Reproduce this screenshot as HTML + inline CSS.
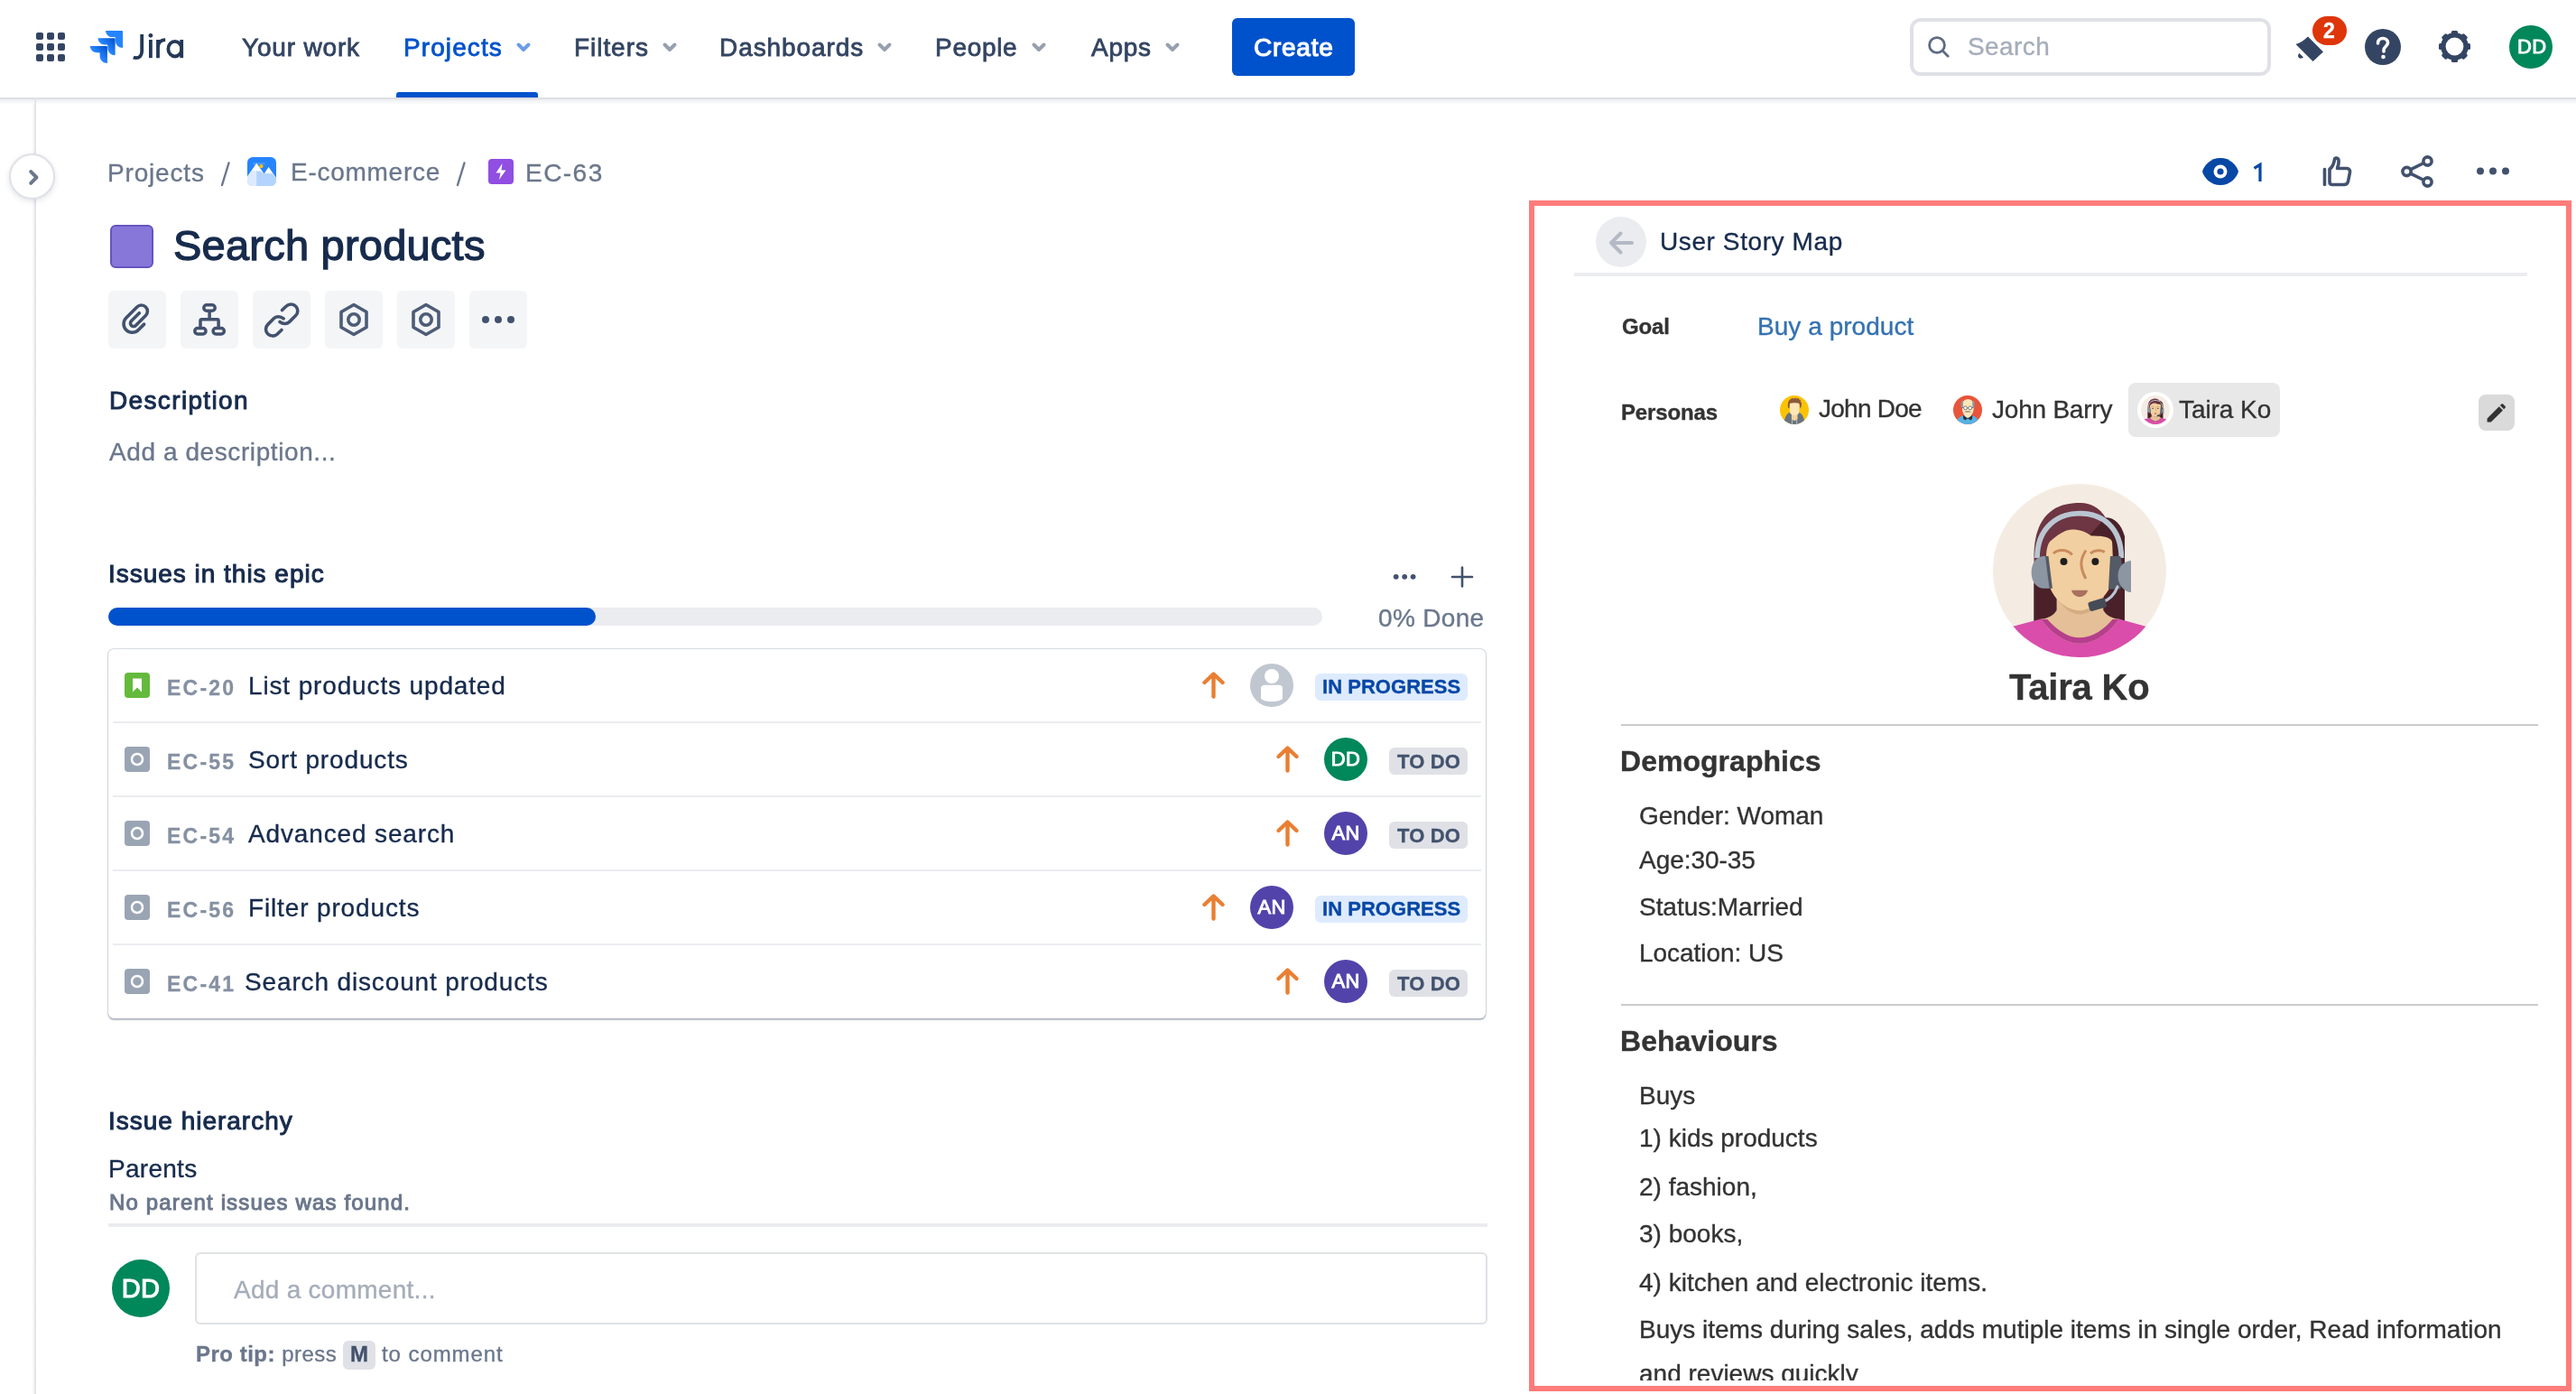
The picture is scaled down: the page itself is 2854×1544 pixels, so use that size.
<!DOCTYPE html>
<html><head><meta charset="utf-8">
<style>
*{box-sizing:border-box;margin:0;padding:0}
html,body{width:2854px;height:1544px;overflow:hidden;background:#fff;font-family:"Liberation Sans",sans-serif}
.a{position:absolute}
.t{position:absolute;white-space:nowrap;line-height:1;will-change:transform}
svg{position:absolute;overflow:visible}
</style></head><body>
<!-- HEADER -->
<div class="a" style="left:0;top:0;width:2854px;height:108px;background:#fff"></div>
<div class="a" style="left:0;top:108px;width:2854px;height:2px;background:#DCDFE4"></div>
<div class="a" style="left:0;top:110px;width:2854px;height:6px;background:linear-gradient(#EDEEF1,rgba(255,255,255,0))"></div>
<!-- app grid -->
<svg style="left:40px;top:36px" width="32" height="32" viewBox="0 0 32 32" fill="#344563">
<rect x="0" y="0" width="8" height="8" rx="2"/><rect x="12" y="0" width="8" height="8" rx="2"/><rect x="24" y="0" width="8" height="8" rx="2"/>
<rect x="0" y="12" width="8" height="8" rx="2"/><rect x="12" y="12" width="8" height="8" rx="2"/><rect x="24" y="12" width="8" height="8" rx="2"/>
<rect x="0" y="24" width="8" height="8" rx="2"/><rect x="12" y="24" width="8" height="8" rx="2"/><rect x="24" y="24" width="8" height="8" rx="2"/>
</svg>
<!-- jira logo -->
<svg style="left:99px;top:33px" width="38" height="38" viewBox="0 0 38 38">
<defs>
<linearGradient id="jg1" x1="0.95" y1="0.05" x2="0.45" y2="0.5"><stop offset="0" stop-color="#0052CC"/><stop offset="1" stop-color="#2684FF"/></linearGradient>
</defs>
<path transform="translate(18.1 0.9)" d="M0 0 H18 Q19 0 19 1 V19 C14.5 19 10.7 15.5 10.7 11 V8.2 C10.7 7.6 10.4 7.2 9.8 7.2 H7.2 C3.2 7.2 0 4 0 0 Z" fill="#2684FF"/>
<path transform="translate(9.6 9.3)" d="M0 0 H18 Q19 0 19 1 V19 C14.5 19 10.7 15.5 10.7 11 V8.2 C10.7 7.6 10.4 7.2 9.8 7.2 H7.2 C3.2 7.2 0 4 0 0 Z" fill="url(#jg1)"/>
<path transform="translate(0.9 18)" d="M0 0 H18 Q19 0 19 1 V19 C14.5 19 10.7 15.5 10.7 11 V8.2 C10.7 7.6 10.4 7.2 9.8 7.2 H7.2 C3.2 7.2 0 4 0 0 Z" fill="url(#jg1)"/>
</svg>
<svg style="left:140px;top:30px" width="70" height="40" viewBox="140 30 70 40" fill="none" stroke="#253858" stroke-width="3.8">
<path d="M157.2 38 V56.5 C157.2 61.5 154.5 64.2 150.8 64.2 C149.7 64.2 148.7 64 147.8 63.6"/>
<circle cx="166.9" cy="39.3" r="2.4" fill="#253858" stroke="none"/>
<path d="M166.9 44 V64.2"/>
<path d="M175 44 V64.2 M175 53 C175 47.5 178 44.2 183.2 44.2"/>
<ellipse cx="193.8" cy="54.2" rx="7.4" ry="8.3"/>
<path d="M201.2 44 V64.2"/>
</svg>
<!-- nav -->
<svg style="left:572px;top:47px" width="16" height="11" viewBox="0 0 16 11"><path d="M2.5 2.5 L8 8 L13.5 2.5" fill="none" stroke="#6C9DE6" stroke-width="4" stroke-linecap="round" stroke-linejoin="round"/></svg>
<div class="a" style="left:439px;top:102px;width:157px;height:6px;background:#0052CC;border-radius:3px 3px 0 0"></div>
<svg style="left:734px;top:47px" width="16" height="11" viewBox="0 0 16 11"><path d="M2.5 2.5 L8 8 L13.5 2.5" fill="none" stroke="#97A0AF" stroke-width="4" stroke-linecap="round" stroke-linejoin="round"/></svg>
<svg style="left:972px;top:47px" width="16" height="11" viewBox="0 0 16 11"><path d="M2.5 2.5 L8 8 L13.5 2.5" fill="none" stroke="#97A0AF" stroke-width="4" stroke-linecap="round" stroke-linejoin="round"/></svg>
<svg style="left:1143px;top:47px" width="16" height="11" viewBox="0 0 16 11"><path d="M2.5 2.5 L8 8 L13.5 2.5" fill="none" stroke="#97A0AF" stroke-width="4" stroke-linecap="round" stroke-linejoin="round"/></svg>
<svg style="left:1291px;top:47px" width="16" height="11" viewBox="0 0 16 11"><path d="M2.5 2.5 L8 8 L13.5 2.5" fill="none" stroke="#97A0AF" stroke-width="4" stroke-linecap="round" stroke-linejoin="round"/></svg>
<div class="a" style="left:1365px;top:20px;width:136px;height:64px;background:#0052CC;border-radius:6px"></div>
<!-- search -->
<div class="a" style="left:2116px;top:20px;width:400px;height:64px;border:4px solid #DFE1E6;border-radius:12px;background:#fff"></div>
<svg style="left:2136px;top:40px" width="24" height="24" viewBox="0 0 24 24"><circle cx="10" cy="10" r="8.4" fill="none" stroke="#5E6C84" stroke-width="2.8"/><path d="M16.3 16.3 L22.2 22.2" stroke="#5E6C84" stroke-width="2.8" stroke-linecap="round"/></svg>
<!-- bell -->
<svg style="left:2543px;top:36px" width="34" height="34" viewBox="0 0 34 34">
<path d="M0.5 13 C5 11.5 9.5 9 14 4.5 L31 21.5 C27 25 24 28 19.5 32 Z" fill="#344563"/>
<path d="M4.5 23 C2.5 24.5 2.5 27.5 5 28.5 C6.5 29 8 28.5 9 27.5 Z" fill="#344563"/>
</svg>
<div class="a" style="left:2562px;top:18px;width:38px;height:32px;background:#DE350B;border-radius:16px"></div>
<!-- help -->
<div class="a" style="left:2620px;top:32px;width:40px;height:40px;background:#344563;border-radius:50%"></div>
<svg style="left:2620px;top:32px" width="40" height="40" viewBox="0 0 40 40"><path d="M14.5 16 C14.5 12.5 17 10.5 20 10.5 C23 10.5 25.5 12.5 25.5 15.5 C25.5 19 21 19.5 21 23.5 L21 25" fill="none" stroke="#fff" stroke-width="3.6" stroke-linecap="round"/><circle cx="20.5" cy="31" r="2.3" fill="#fff"/></svg>
<!-- gear -->
<svg style="left:2702px;top:34px" width="35" height="35" viewBox="0 0 35 35">
<g fill="#344563" transform="translate(17.5 17.5)">
<rect x="-3.6" y="-17.5" width="7.2" height="7" rx="1.6"/><rect x="-3.6" y="-17.5" width="7.2" height="7" rx="1.6" transform="rotate(45)"/><rect x="-3.6" y="-17.5" width="7.2" height="7" rx="1.6" transform="rotate(90)"/><rect x="-3.6" y="-17.5" width="7.2" height="7" rx="1.6" transform="rotate(135)"/><rect x="-3.6" y="-17.5" width="7.2" height="7" rx="1.6" transform="rotate(180)"/><rect x="-3.6" y="-17.5" width="7.2" height="7" rx="1.6" transform="rotate(225)"/><rect x="-3.6" y="-17.5" width="7.2" height="7" rx="1.6" transform="rotate(270)"/><rect x="-3.6" y="-17.5" width="7.2" height="7" rx="1.6" transform="rotate(315)"/>
</g>
<circle cx="17.5" cy="17.5" r="12.6" fill="none" stroke="#344563" stroke-width="5.4"/>
</svg>
<!-- avatar -->
<div class="a" style="left:2780px;top:28px;width:48px;height:48px;background:#00875A;border-radius:50%"></div>

<!-- SIDEBAR -->
<div class="a" style="left:35px;top:116px;width:3px;height:1428px;background:linear-gradient(90deg,rgba(245,245,245,0),#F4F4F5)"></div>
<div class="a" style="left:38px;top:108px;width:2px;height:1436px;background:#E4E5E8"></div>
<div class="a" style="left:10px;top:170px;width:51px;height:51px;border-radius:50%;background:#fff;border:2px solid #DFE1E6;box-shadow:0 2px 6px rgba(9,30,66,0.12)"></div>
<svg style="left:32px;top:188px" width="11" height="17" viewBox="0 0 11 17"><path d="M2.2 2.2 L8.5 8.5 L2.2 14.8" fill="none" stroke="#6B778C" stroke-width="4" stroke-linecap="round" stroke-linejoin="round"/></svg>


<!-- BREADCRUMB -->
<svg style="left:274px;top:174px" width="32" height="32" viewBox="0 0 32 32">
<defs><clipPath id="ecc"><rect width="32" height="32" rx="6"/></clipPath></defs>
<g clip-path="url(#ecc)">
<rect width="32" height="32" fill="#2684FF"/>
<rect x="5.9" y="6.2" width="14" height="2.3" rx="1.15" fill="#4C9AFF"/>
<circle cx="15.4" cy="10.2" r="2.1" fill="#FFC400"/>
<path d="M-1 23 L10.2 6.8 L18.6 18.6 L23.6 10.9 L33 24.5 L33 33 L-1 33 Z" fill="#fff"/>
<path d="M-1 23 L4.7 15.2 L6 16 L7.5 15 L9 16.2 L10.5 15 L12 16 L13.5 15 L14.6 15.8 L18.6 18.6 L20.5 17.7 L22 18.4 L23.5 17.5 L25 18.5 L27.3 17.7 L33 24.5 L33 33 L-1 33 Z" fill="#B3D4FF"/>
<path d="M-1 23 L4.7 15.2 L6 16 L7.5 15 L9 16.2 L10.2 15.4 L10.2 33 L-1 33 Z" fill="#DEEBFF"/>
</g>
</svg>
<svg style="left:541px;top:176px" width="28" height="28" viewBox="0 0 28 28"><rect width="28" height="28" rx="4" fill="#904EE2"/><path d="M15.5 5 L8.5 15.5 H13.5 L12 23 L19.5 12.5 H14.5 Z" fill="#fff"/></svg>

<svg style="left:244px;top:178px" width="12" height="30" viewBox="0 0 12 30"><path d="M2 27 L9.5 2.5" stroke="#6B778C" stroke-width="2.4" stroke-linecap="round"/></svg>
<svg style="left:505px;top:178px" width="12" height="30" viewBox="0 0 12 30"><path d="M2 27 L9.5 2.5" stroke="#6B778C" stroke-width="2.4" stroke-linecap="round"/></svg>
<!-- TITLE -->
<div class="a" style="left:122px;top:249px;width:48px;height:48px;background:#8777D9;border:2px solid #6554C0;border-radius:6px"></div>

<!-- TOOLBAR -->
<div class="a" style="left:120px;top:322px;width:64px;height:64px;background:#F4F5F7;border-radius:6px"></div>
<div class="a" style="left:200px;top:322px;width:64px;height:64px;background:#F4F5F7;border-radius:6px"></div>
<div class="a" style="left:280px;top:322px;width:64px;height:64px;background:#F4F5F7;border-radius:6px"></div>
<div class="a" style="left:360px;top:322px;width:64px;height:64px;background:#F4F5F7;border-radius:6px"></div>
<div class="a" style="left:440px;top:322px;width:64px;height:64px;background:#F4F5F7;border-radius:6px"></div>
<div class="a" style="left:520px;top:322px;width:64px;height:64px;background:#F4F5F7;border-radius:6px"></div>
<!-- paperclip -->
<svg style="left:120px;top:322px" width="64" height="64" viewBox="0 0 64 64"><g transform="translate(31.5 31.8) rotate(45)"><path d="M9.5 -2 V7 A9.5 9.5 0 0 1 -9.5 7 V-10 A6.75 6.75 0 0 1 4 -10 V5.5 A3.5 3.5 0 0 1 -3 5.5 V-7" fill="none" stroke="#42526E" stroke-width="3.6" stroke-linecap="round"/></g></svg>
<!-- hierarchy -->
<svg style="left:200px;top:322px" width="64" height="64" viewBox="0 0 64 64" fill="none" stroke="#42526E" stroke-width="3.5"><rect x="25.8" y="15.8" width="12.4" height="6.4" rx="3.2"/><rect x="15.8" y="41.6" width="12.2" height="6.3" rx="3.15"/><rect x="36.1" y="41.6" width="12.2" height="6.3" rx="3.15"/><path d="M32.1 22 V31.8 M22 41.6 V33.3 Q22 31.8 23.5 31.8 H40.6 Q42.1 31.8 42.1 33.3 V41.6"/></svg>
<!-- link -->
<svg style="left:280px;top:322px" width="64" height="64" viewBox="0 0 64 64" fill="none" stroke="#42526E" stroke-width="3.6" stroke-linecap="round"><path d="M32.5 21.5 L37 17.2 C40 14.3 45 14.3 47.8 17.4 C50.6 20.4 50.4 24.8 47.6 27.6 L40.5 34.6 C38 37 33.5 37.2 30 34.5"/><path d="M32 43.5 L27.3 48 C24.3 50.8 19.5 50.8 16.6 47.8 C13.8 44.8 13.8 40.3 16.8 37.4 L23.6 30.6 C26.2 28.1 30.7 27.9 34.2 30.8"/></svg>
<!-- hexagons -->
<svg style="left:360px;top:322px" width="64" height="64" viewBox="0 0 64 64" fill="none" stroke="#4D5C77" stroke-width="3.6" stroke-linejoin="round"><path d="M32 15.5 L46 23.5 V40.5 L32 48.5 L18 40.5 V23.5 Z"/><circle cx="32" cy="32" r="6.2"/></svg>
<svg style="left:440px;top:322px" width="64" height="64" viewBox="0 0 64 64" fill="none" stroke="#4D5C77" stroke-width="3.6" stroke-linejoin="round"><path d="M32 15.5 L46 23.5 V40.5 L32 48.5 L18 40.5 V23.5 Z"/><circle cx="32" cy="32" r="6.2"/></svg>
<svg style="left:520px;top:322px" width="64" height="64" viewBox="0 0 64 64" fill="#42526E"><circle cx="18" cy="32" r="4"/><circle cx="32" cy="32" r="4"/><circle cx="46" cy="32" r="4"/></svg>

<!-- DESCRIPTION -->

<!-- ISSUES IN EPIC -->
<svg style="left:1543px;top:634px" width="26" height="9" viewBox="0 0 26 9" fill="#42526E"><circle cx="3.7" cy="4.8" r="2.9"/><circle cx="13.2" cy="4.8" r="2.9"/><circle cx="22.6" cy="4.8" r="2.9"/></svg>
<svg style="left:1607px;top:627px" width="26" height="24" viewBox="0 0 26 24" fill="none" stroke="#42526E" stroke-width="2.6" stroke-linecap="round"><path d="M13 1.5 V22.5 M2 12 H24"/></svg>
<div class="a" style="left:120px;top:673px;width:1345px;height:20px;background:#EBECF0;border-radius:10px"></div>
<div class="a" style="left:120px;top:673px;width:540px;height:20px;background:#0052CC;border-radius:10px"></div>

<div class="a" style="left:120px;top:719px;width:1526px;height:409px;border-radius:6px;box-shadow:0 0 0 1px rgba(9,30,66,0.12),0 1.5px 1.5px rgba(9,30,66,0.25),0 0 2px rgba(9,30,66,0.12)"></div>
<svg style="left:138px;top:745px" width="28" height="28" viewBox="0 0 28 28"><rect width="28" height="28" rx="4" fill="#63BA3C"/><path d="M9 6.5 H19 V21.5 L14 16.5 L9 21.5 Z" fill="#fff"/></svg>
<div class="a" style="left:1457px;top:746px;width:169px;height:30px;background:#DEEBFF;border-radius:6px"></div>
<svg style="left:1385px;top:735px" width="48" height="48" viewBox="0 0 48 48"><circle cx="24" cy="24" r="24" fill="#C1C7D0"/><circle cx="24" cy="14" r="8" fill="#fff"/><path d="M12 27.5 C12 25 13.5 23.7 16 23.7 H32 C34.5 23.7 36 25 36 27.5 V38 C36 40.5 30 42 24 42 C18 42 12 40.5 12 38 Z" fill="#fff"/></svg>
<svg style="left:1332px;top:744px" width="25" height="30" viewBox="0 0 25 30" fill="none" stroke="#E97F33" stroke-width="4.4" stroke-linecap="round" stroke-linejoin="round"><path d="M12.5 27.5 V3 M2.5 12 L12.5 2.5 L22.5 12"/></svg>
<div class="a" style="left:125px;top:799px;width:1516px;height:2px;background:#EBECF0"></div>
<svg style="left:138px;top:827px" width="28" height="28" viewBox="0 0 28 28"><rect width="28" height="28" rx="4" fill="#9AA5B4"/><circle cx="14" cy="14" r="6" fill="none" stroke="#fff" stroke-width="2.5"/></svg>
<div class="a" style="left:1539px;top:828px;width:87px;height:30px;background:#DFE1E6;border-radius:6px"></div>
<div class="a" style="left:1467px;top:817px;width:48px;height:48px;border-radius:50%;background:#00875A"></div>
<svg style="left:1414px;top:826px" width="25" height="30" viewBox="0 0 25 30" fill="none" stroke="#E97F33" stroke-width="4.4" stroke-linecap="round" stroke-linejoin="round"><path d="M12.5 27.5 V3 M2.5 12 L12.5 2.5 L22.5 12"/></svg>
<div class="a" style="left:125px;top:881px;width:1516px;height:2px;background:#EBECF0"></div>
<svg style="left:138px;top:909px" width="28" height="28" viewBox="0 0 28 28"><rect width="28" height="28" rx="4" fill="#9AA5B4"/><circle cx="14" cy="14" r="6" fill="none" stroke="#fff" stroke-width="2.5"/></svg>
<div class="a" style="left:1539px;top:910px;width:87px;height:30px;background:#DFE1E6;border-radius:6px"></div>
<div class="a" style="left:1467px;top:899px;width:48px;height:48px;border-radius:50%;background:#5243AA"></div>
<svg style="left:1414px;top:908px" width="25" height="30" viewBox="0 0 25 30" fill="none" stroke="#E97F33" stroke-width="4.4" stroke-linecap="round" stroke-linejoin="round"><path d="M12.5 27.5 V3 M2.5 12 L12.5 2.5 L22.5 12"/></svg>
<div class="a" style="left:125px;top:963px;width:1516px;height:2px;background:#EBECF0"></div>
<svg style="left:138px;top:991px" width="28" height="28" viewBox="0 0 28 28"><rect width="28" height="28" rx="4" fill="#9AA5B4"/><circle cx="14" cy="14" r="6" fill="none" stroke="#fff" stroke-width="2.5"/></svg>
<div class="a" style="left:1457px;top:992px;width:169px;height:30px;background:#DEEBFF;border-radius:6px"></div>
<div class="a" style="left:1385px;top:981px;width:48px;height:48px;border-radius:50%;background:#5243AA"></div>
<svg style="left:1332px;top:990px" width="25" height="30" viewBox="0 0 25 30" fill="none" stroke="#E97F33" stroke-width="4.4" stroke-linecap="round" stroke-linejoin="round"><path d="M12.5 27.5 V3 M2.5 12 L12.5 2.5 L22.5 12"/></svg>
<div class="a" style="left:125px;top:1045px;width:1516px;height:2px;background:#EBECF0"></div>
<svg style="left:138px;top:1073px" width="28" height="28" viewBox="0 0 28 28"><rect width="28" height="28" rx="4" fill="#9AA5B4"/><circle cx="14" cy="14" r="6" fill="none" stroke="#fff" stroke-width="2.5"/></svg>
<div class="a" style="left:1539px;top:1074px;width:87px;height:30px;background:#DFE1E6;border-radius:6px"></div>
<div class="a" style="left:1467px;top:1063px;width:48px;height:48px;border-radius:50%;background:#5243AA"></div>
<svg style="left:1414px;top:1072px" width="25" height="30" viewBox="0 0 25 30" fill="none" stroke="#E97F33" stroke-width="4.4" stroke-linecap="round" stroke-linejoin="round"><path d="M12.5 27.5 V3 M2.5 12 L12.5 2.5 L22.5 12"/></svg>

<!-- ISSUE HIERARCHY -->
<div class="a" style="left:120px;top:1355px;width:1528px;height:4px;background:#EBECF0"></div>

<!-- COMMENT -->
<div class="a" style="left:124px;top:1395px;width:64px;height:64px;border-radius:50%;background:#00875A"></div>
<div class="a" style="left:216px;top:1387px;width:1432px;height:80px;border:2px solid #DFE1E6;border-radius:6px"></div>
<div class="a" style="left:380px;top:1485px;width:36px;height:32px;background:#DFE1E6;border-radius:6px"></div>

<!-- TOP RIGHT ACTIONS -->
<svg style="left:2440px;top:174px" width="40" height="32" viewBox="0 0 40 32"><path d="M20 1 C31 1 38 9 40 16 C38 23 31 31 20 31 C9 31 2 23 0 16 C2 9 9 1 20 1 Z" fill="#0747A6"/><circle cx="20" cy="16" r="7.5" fill="#fff"/><circle cx="20" cy="16" r="3.6" fill="#0747A6"/></svg>
<svg style="left:2494px;top:180px" width="16" height="24" viewBox="0 0 16 24"><path d="M3.5 6.4 L10 2.3 V21" fill="none" stroke="#0747A6" stroke-width="3.2" stroke-linejoin="miter"/></svg>
<svg style="left:2573px;top:173px" width="34" height="34" viewBox="0 0 34 34" fill="none" stroke="#42526E" stroke-width="3.6" stroke-linejoin="round" stroke-linecap="round"><path d="M2.5 14.5 V31.5"/><path d="M8 14.5 C11 12 13 8 13.5 3.5 C14 1.5 17.5 1.5 18 4.5 C18.5 7.5 17.5 11 16.5 13.5 H27 C29.5 13.5 31 15.5 30.5 18 L28.5 28 C28 30.5 26.5 31.5 24 31.5 H11 C9 31.5 8 30.5 8 28.5 Z"/></svg>
<svg style="left:2660px;top:172px" width="36" height="36" viewBox="0 0 36 36" fill="none" stroke="#42526E" stroke-width="3.6"><circle cx="29.5" cy="6.5" r="4.6"/><circle cx="6.5" cy="18" r="4.6"/><circle cx="29.5" cy="29.5" r="4.6"/><path d="M10.5 15.8 L25.5 8.5 M10.5 20.2 L25.5 27.5"/></svg>
<svg style="left:2744px;top:185px" width="36" height="9" viewBox="0 0 36 9" fill="#42526E"><circle cx="4" cy="4.5" r="4"/><circle cx="18" cy="4.5" r="4"/><circle cx="32" cy="4.5" r="4"/></svg>



<!-- RIGHT PANEL -->
<div class="a" style="left:1694px;top:222px;width:1155px;height:1319px;border:6px solid #FF7C7A"></div>
<div class="a" style="left:1768px;top:240px;width:56px;height:56px;border-radius:50%;background:#EBECF0"></div>
<svg style="left:1782px;top:256px" width="28" height="26" viewBox="0 0 28 26" fill="none" stroke="#B3BAC5" stroke-width="4" stroke-linecap="round" stroke-linejoin="round"><path d="M26 13 H3 M13.5 2.5 L3 13 L13.5 23.5"/></svg>
<div class="a" style="left:1744px;top:302px;width:1056px;height:4px;background:#EBECF0"></div>


<!-- John Doe avatar -->
<svg style="left:1972px;top:438px" width="32" height="32" viewBox="0 0 32 32">
<defs><clipPath id="cj1"><circle cx="16" cy="16" r="16"/></clipPath></defs>
<g clip-path="url(#cj1)">
<rect width="32" height="32" fill="#FBC303"/>
<path d="M4.9 28 C6 22 9 19 13 17.8 L19.5 17.8 C23 19 26 22 27 28 L27 33 L4.9 33 Z" fill="#697380"/>
<path d="M12.9 19 H19.5 V26.5 L16.2 28 L12.9 26.5 Z" fill="#F3D49E"/>
<path d="M10.9 9 C10.9 7.5 12 7 16 7 C20 7 21.5 7.5 21.5 9 L21.5 18 C21.5 20.5 19 21.8 16.2 21.8 C13.4 21.8 10.9 20.5 10.9 18 Z" fill="#FDE6B8"/>
<path d="M9 13.5 C8.5 8 9.5 5 12 4 L14 2.5 L15 3.8 L17.5 2.2 L18 3.5 L21 3 L21.2 4.5 L23.5 5 L22.5 6 L24 8.5 C24.2 11 23.5 13.5 22.5 14.6 L21.5 9 C20 8 12.5 8 10.9 9 L10.5 14.6 Z" fill="#8C5B3E"/>
<path d="M13.5 27 V32 M18.7 27 V32" stroke="#D9DEE3" stroke-width="0.7"/>
</g></svg>

<!-- John Barry avatar -->
<svg style="left:2164px;top:438px" width="32" height="32" viewBox="0 0 32 32">
<defs><clipPath id="cj2"><circle cx="16" cy="16" r="16"/></clipPath></defs>
<g clip-path="url(#cj2)">
<rect width="32" height="32" fill="#E8553B"/>
<path d="M4.3 28 C6 24 9 22.7 12 22 L20 22 C23 22.7 26 24 27.6 28 L27.6 33 L4.3 33 Z" fill="#56B2E5"/>
<path d="M10.9 21.8 L16.1 25 L21.3 21.8 L21 26 L19.5 27.6 L16.1 25.5 L13.2 27.6 L11.2 26 Z" fill="#2B3441"/>
<path d="M10 11 C10 6.5 12.5 4.3 16.3 4.3 C20.2 4.3 22.7 6.5 22.7 11 L22.7 15 C22.7 19 19 24.7 16.1 24.7 C13.2 24.7 10 19 10 15 Z" fill="#FDE6B8"/>
<path d="M8.6 13.2 L8.6 9 C8.6 7 9.5 5.8 10.9 5.5 L10.9 13.2 Z M23.8 13.2 L23.8 9 C23.8 7 23 5.8 21.3 5.5 L21.3 13.2 Z" fill="#8D969E"/>
<circle cx="13.5" cy="13.9" r="1.9" fill="#fff" stroke="#676B70" stroke-width="0.9"/>
<circle cx="18.7" cy="13.9" r="1.9" fill="#fff" stroke="#676B70" stroke-width="0.9"/>
<path d="M15.4 13.9 H16.8 M9.8 13.5 H11.6 M20.6 13.5 H22.6" stroke="#676B70" stroke-width="0.8"/>
<path d="M12.4 18.8 C13.5 17.2 15 17 16.1 17.6 C17.2 17 18.7 17.2 19.8 18.8 C18.5 18.4 17 18.6 16.1 19 C15.2 18.6 13.7 18.4 12.4 18.8 Z" fill="#86888A"/>
</g></svg>

<!-- Taira chip -->
<div class="a" style="left:2358px;top:424px;width:168px;height:60px;background:#E8E8E8;border-radius:8px"></div>
<div class="a" style="left:2368px;top:434px;width:40px;height:40px;background:#fff;border-radius:50%"></div>
<svg style="left:2372px;top:438px" width="32" height="32" viewBox="0 0 192 192"><g>
<g clip-path="url(#cbig)">
<rect width="192" height="192" fill="#F4ECE2"/>
<path d="M45.5 152 L45.5 82 C45.5 60 50 40 66 29 C76 22 88 21 97 21 C108 21 118 26 125 37.6 C133 37 141 43 145 58 C146.5 70 146 100 146 152 Z" fill="#6E3542"/>
<path d="M45.5 152 L45.5 110 L72 110 L72 152 Z" fill="#4A2129"/>
<path d="M146 152 L146 58 C142 44 134 37 125 37.6 C120 42 114 50 108 56 L120 110 L120 152 Z" fill="#4A2129"/>
<path d="M70.6 122 L122.3 122 L122.3 140 C126 146 132 149 139.5 149.5 L139.5 185 L53.4 185 L53.4 149.5 C61 149 67 146 70.6 140 Z" fill="#E5BF97"/>
<path d="M70.6 126 C78 138 88 144.5 96.4 144.5 C105 144.5 115 138 122.3 126 L122.3 122 L70.6 122 Z" fill="#D4AD85"/>
<path d="M59 82 C59 72 61 66 63.4 63.4 C72 56 80 50.5 87.8 50.5 C96 50.5 103 53 109 57.5 C118 57.5 127 58 131 62 C132.3 64 132.3 66 132.3 68 L133.7 105 C130 120 112 140.2 96.4 140.2 C82 140.2 68 128 63.4 115 Z" fill="#F2CFA0"/>
<path d="M49 82 C49 48 72 32.6 96.4 32.6 C121 32.6 142.3 48 142.3 82" fill="none" stroke="#B9C6D2" stroke-width="5.8"/>
<path d="M57 80 C48 80 42.6 88 42.6 98 C42.6 108 48 115.8 57 115.8 L63.4 115.8 L59 80 Z" fill="#8C96A3"/>
<path d="M58 80 L61.5 80 L66 115.8 L62.5 115.8 Z" fill="#545A66"/>
<path d="M130 80 L141 80 C144 86 144 110 141 116.5 L128 116.5 Z" fill="#545A66"/>
<path d="M153 85 L153 120 C146 120 138.5 112 138.5 102 C138.5 92 144 86 153 85 Z" fill="#8C96A3"/>
<path d="M138 114 C135 122 130 128 121 131" fill="none" stroke="#B9C6D2" stroke-width="3.2" stroke-linecap="round"/>
<rect x="106" y="128.5" width="19.5" height="10.5" rx="2.5" fill="#464B57" transform="rotate(-17 115.7 133.7)"/>
<circle cx="78.5" cy="86.1" r="4" fill="#1E1E1E"/>
<circle cx="113.4" cy="86.1" r="4" fill="#1E1E1E"/>
<path d="M67 77 C72 72 82 72 87.8 78.5" fill="none" stroke="#C98B5E" stroke-width="3"/>
<path d="M108 77 C113 73 120 73 123.7 75.5" fill="none" stroke="#C98B5E" stroke-width="3"/>
<path d="M103 73.5 C99 80 97.5 86 97.9 90 C98.5 96 100 100 103 105" fill="none" stroke="#C98B5E" stroke-width="3"/>
<path d="M87.1 117.7 H105.2 C104 122 100.5 125 96.2 125 C91.5 125 88 122 87.1 117.7 Z" fill="#A8705F"/>
<path d="M-5 165 L23.3 157.4 L53.4 149.5 C62 162 78 176.8 96.4 176.8 C115 176.8 131 162 139.5 149.5 L168.2 157.4 L200 165 L200 200 L-5 200 Z" fill="#DA4DAB"/>
<path d="M53.4 149.5 C62 162 78 176.8 96.4 176.8 C115 176.8 131 162 139.5 149.5 L132.5 150 C124 160 111 170.3 96.4 170.3 C82 170.3 69 160 60.4 150 Z" fill="#B63F8C"/>
</g>
</g>
</svg>

<!-- edit -->
<div class="a" style="left:2746px;top:437px;width:40px;height:40px;background:#DBDADB;border-radius:8px"></div>
<svg style="left:2754px;top:445px" width="24" height="24" viewBox="0 0 24 24"><path transform="translate(11.8 12.4) scale(1.2) translate(-11.5 -12.5)" d="M3 17.5 V21 H6.5 L17.5 10 L14 6.5 Z M19.7 7.8 C20.1 7.4 20.1 6.8 19.7 6.4 L17.6 4.3 C17.2 3.9 16.6 3.9 16.2 4.3 L14.9 5.6 L18.4 9.1 Z" fill="#333"/></svg>

<!-- big avatar -->
<svg style="left:2208px;top:536px" width="192" height="192" viewBox="0 0 192 192">
<defs>
<clipPath id="cbig"><circle cx="96" cy="96" r="96"/></clipPath>
</defs>
<g>
<g clip-path="url(#cbig)">
<rect width="192" height="192" fill="#F4ECE2"/>
<path d="M45.5 152 L45.5 82 C45.5 60 50 40 66 29 C76 22 88 21 97 21 C108 21 118 26 125 37.6 C133 37 141 43 145 58 C146.5 70 146 100 146 152 Z" fill="#6E3542"/>
<path d="M45.5 152 L45.5 110 L72 110 L72 152 Z" fill="#4A2129"/>
<path d="M146 152 L146 58 C142 44 134 37 125 37.6 C120 42 114 50 108 56 L120 110 L120 152 Z" fill="#4A2129"/>
<path d="M70.6 122 L122.3 122 L122.3 140 C126 146 132 149 139.5 149.5 L139.5 185 L53.4 185 L53.4 149.5 C61 149 67 146 70.6 140 Z" fill="#E5BF97"/>
<path d="M70.6 126 C78 138 88 144.5 96.4 144.5 C105 144.5 115 138 122.3 126 L122.3 122 L70.6 122 Z" fill="#D4AD85"/>
<path d="M59 82 C59 72 61 66 63.4 63.4 C72 56 80 50.5 87.8 50.5 C96 50.5 103 53 109 57.5 C118 57.5 127 58 131 62 C132.3 64 132.3 66 132.3 68 L133.7 105 C130 120 112 140.2 96.4 140.2 C82 140.2 68 128 63.4 115 Z" fill="#F2CFA0"/>
<path d="M49 82 C49 48 72 32.6 96.4 32.6 C121 32.6 142.3 48 142.3 82" fill="none" stroke="#B9C6D2" stroke-width="5.8"/>
<path d="M57 80 C48 80 42.6 88 42.6 98 C42.6 108 48 115.8 57 115.8 L63.4 115.8 L59 80 Z" fill="#8C96A3"/>
<path d="M58 80 L61.5 80 L66 115.8 L62.5 115.8 Z" fill="#545A66"/>
<path d="M130 80 L141 80 C144 86 144 110 141 116.5 L128 116.5 Z" fill="#545A66"/>
<path d="M153 85 L153 120 C146 120 138.5 112 138.5 102 C138.5 92 144 86 153 85 Z" fill="#8C96A3"/>
<path d="M138 114 C135 122 130 128 121 131" fill="none" stroke="#B9C6D2" stroke-width="3.2" stroke-linecap="round"/>
<rect x="106" y="128.5" width="19.5" height="10.5" rx="2.5" fill="#464B57" transform="rotate(-17 115.7 133.7)"/>
<circle cx="78.5" cy="86.1" r="4" fill="#1E1E1E"/>
<circle cx="113.4" cy="86.1" r="4" fill="#1E1E1E"/>
<path d="M67 77 C72 72 82 72 87.8 78.5" fill="none" stroke="#C98B5E" stroke-width="3"/>
<path d="M108 77 C113 73 120 73 123.7 75.5" fill="none" stroke="#C98B5E" stroke-width="3"/>
<path d="M103 73.5 C99 80 97.5 86 97.9 90 C98.5 96 100 100 103 105" fill="none" stroke="#C98B5E" stroke-width="3"/>
<path d="M87.1 117.7 H105.2 C104 122 100.5 125 96.2 125 C91.5 125 88 122 87.1 117.7 Z" fill="#A8705F"/>
<path d="M-5 165 L23.3 157.4 L53.4 149.5 C62 162 78 176.8 96.4 176.8 C115 176.8 131 162 139.5 149.5 L168.2 157.4 L200 165 L200 200 L-5 200 Z" fill="#DA4DAB"/>
<path d="M53.4 149.5 C62 162 78 176.8 96.4 176.8 C115 176.8 131 162 139.5 149.5 L132.5 150 C124 160 111 170.3 96.4 170.3 C82 170.3 69 160 60.4 150 Z" fill="#B63F8C"/>
</g>
</g>

</svg>
<div class="a" style="left:1796px;top:802px;width:1016px;height:2px;background:#CCCCCC"></div>

<div class="a" style="left:1796px;top:1112px;width:1016px;height:2px;background:#CCCCCC"></div>



<div class="t" style="left:268.00px;top:39.30px;font-size:28px;color:#344563;letter-spacing:0.825px;-webkit-text-stroke:0.8px #344563;">Your work</div>
<div class="t" style="left:446.85px;top:39.10px;font-size:28px;color:#0052CC;letter-spacing:1.093px;-webkit-text-stroke:0.8px #0052CC;">Projects</div>
<div class="t" style="left:635.50px;top:39.30px;font-size:28px;color:#344563;letter-spacing:0.950px;-webkit-text-stroke:0.8px #344563;">Filters</div>
<div class="t" style="left:796.85px;top:39.10px;font-size:28px;color:#344563;letter-spacing:0.928px;-webkit-text-stroke:0.8px #344563;">Dashboards</div>
<div class="t" style="left:1035.50px;top:39.10px;font-size:28px;color:#344563;letter-spacing:0.700px;-webkit-text-stroke:0.8px #344563;">People</div>
<div class="t" style="left:1208.70px;top:39.30px;font-size:28px;color:#344563;letter-spacing:0.767px;-webkit-text-stroke:0.8px #344563;">Apps</div>
<div class="t" style="left:1388.85px;top:39.30px;font-size:28px;color:#fff;letter-spacing:0.750px;-webkit-text-stroke:1.1px #fff;">Create</div>
<div class="t" style="left:2180.00px;top:38.30px;font-size:28px;color:#A5ADBA;letter-spacing:0.400px;-webkit-text-stroke:0.35px #A5ADBA;">Search</div>
<div class="t" style="left:2574.00px;top:23.03px;font-size:23px;font-weight:700;color:#fff;letter-spacing:0.000px;-webkit-text-stroke:0.35px #fff;">2</div>
<div class="t" style="left:2789.00px;top:41.38px;font-size:22px;color:#fff;letter-spacing:0.300px;width:0;-webkit-text-stroke:0.9px #fff;">DD</div>
<div class="t" style="left:119.00px;top:178.30px;font-size:28px;color:#6B778C;letter-spacing:0.829px;-webkit-text-stroke:0.35px #6B778C;">Projects</div>
<div class="t" style="left:321.54px;top:177.30px;font-size:28px;color:#6B778C;letter-spacing:0.732px;-webkit-text-stroke:0.35px #6B778C;">E-commerce</div>
<div class="t" style="left:582.00px;top:177.90px;font-size:28px;color:#6B778C;letter-spacing:1.465px;-webkit-text-stroke:0.35px #6B778C;">EC-63</div>
<div class="t" style="left:192.00px;top:247.53px;font-size:47px;color:#172B4D;letter-spacing:0.224px;-webkit-text-stroke:1.3px #172B4D;">Search products</div>
<div class="t" style="left:120.74px;top:430.12px;font-size:28px;color:#172B4D;letter-spacing:1.352px;-webkit-text-stroke:1.0px #172B4D;">Description</div>
<div class="t" style="left:120.58px;top:487.30px;font-size:28px;color:#6B778C;letter-spacing:0.584px;-webkit-text-stroke:0.35px #6B778C;">Add a description...</div>
<div class="t" style="left:119.54px;top:622.16px;font-size:28px;color:#172B4D;letter-spacing:0.980px;-webkit-text-stroke:1.0px #172B4D;">Issues in this epic</div>
<div class="t" style="left:1527.00px;top:670.96px;font-size:28px;color:#6B778C;letter-spacing:0.333px;-webkit-text-stroke:0.35px #6B778C;">0% Done</div>
<div class="t" style="left:119.68px;top:1228.32px;font-size:28px;color:#172B4D;letter-spacing:0.989px;-webkit-text-stroke:1.0px #172B4D;">Issue hierarchy</div>
<div class="t" style="left:119.68px;top:1280.58px;font-size:28px;color:#172B4D;letter-spacing:0.280px;-webkit-text-stroke:0.35px #172B4D;">Parents</div>
<div class="t" style="left:120.68px;top:1320.46px;font-size:24px;color:#6B778C;letter-spacing:1.156px;-webkit-text-stroke:1.0px #6B778C;">No parent issues was found.</div>
<div class="t" style="left:124.00px;top:1412.95px;font-size:29px;color:#fff;letter-spacing:0.300px;width:64px;text-align:center;-webkit-text-stroke:1.1px #fff;">DD</div>
<div class="t" style="left:259.04px;top:1415.30px;font-size:28px;color:#A5ADBA;letter-spacing:0.269px;-webkit-text-stroke:0.35px #A5ADBA;">Add a comment...</div>
<div class="t" style="left:216.68px;top:1488.32px;font-size:24px;color:#6B778C;letter-spacing:0.497px;-webkit-text-stroke:0.35px #6B778C;"><b>Pro tip:</b> press</div>
<div class="t" style="left:380.00px;top:1487.68px;font-size:24px;font-weight:700;color:#42526E;letter-spacing:0.000px;width:36px;text-align:center;-webkit-text-stroke:0.35px #42526E;">M</div>
<div class="t" style="left:423.04px;top:1488.32px;font-size:24px;color:#6B778C;letter-spacing:0.931px;-webkit-text-stroke:0.35px #6B778C;">to comment</div>
<div class="t" style="left:1839.46px;top:254.38px;font-size:28px;color:#172B4D;letter-spacing:0.594px;-webkit-text-stroke:0.35px #172B4D;">User Story Map</div>
<div class="t" style="left:1797.00px;top:349.68px;font-size:24px;font-weight:700;color:#333;letter-spacing:-0.180px;-webkit-text-stroke:0.35px #333;">Goal</div>
<div class="t" style="left:1947.46px;top:348.48px;font-size:28px;color:#3572B0;letter-spacing:0.042px;-webkit-text-stroke:0.35px #3572B0;">Buy a product</div>
<div class="t" style="left:1796.00px;top:444.68px;font-size:24px;font-weight:700;color:#333;letter-spacing:-0.143px;-webkit-text-stroke:0.35px #333;">Personas</div>
<div class="t" style="left:2015.46px;top:439.48px;font-size:28px;color:#333;letter-spacing:-0.740px;-webkit-text-stroke:0.35px #333;">John Doe</div>
<div class="t" style="left:2207.00px;top:440.30px;font-size:28px;color:#333;letter-spacing:-0.222px;-webkit-text-stroke:0.35px #333;">John Barry</div>
<div class="t" style="left:2414.00px;top:440.46px;font-size:28px;color:#333;letter-spacing:-0.066px;-webkit-text-stroke:0.35px #333;">Taira Ko</div>
<div class="t" style="left:2226.46px;top:741.14px;font-size:40px;font-weight:700;color:#333;letter-spacing:-0.203px;-webkit-text-stroke:0.35px #333;">Taira Ko</div>
<div class="t" style="left:1795.04px;top:826.83px;font-size:32px;font-weight:700;color:#333;letter-spacing:0.033px;-webkit-text-stroke:0.35px #333;">Demographics</div>
<div class="t" style="left:1816.00px;top:889.54px;font-size:28px;color:#333;letter-spacing:-0.045px;-webkit-text-stroke:0.35px #333;">Gender: Woman</div>
<div class="t" style="left:1816.00px;top:938.74px;font-size:28px;color:#333;letter-spacing:-0.045px;-webkit-text-stroke:0.35px #333;">Age:30-35</div>
<div class="t" style="left:1816.00px;top:990.74px;font-size:28px;color:#333;letter-spacing:-0.045px;-webkit-text-stroke:0.35px #333;">Status:Married</div>
<div class="t" style="left:1816.00px;top:1042.24px;font-size:28px;color:#333;letter-spacing:-0.045px;-webkit-text-stroke:0.35px #333;">Location: US</div>
<div class="t" style="left:1795.04px;top:1137.23px;font-size:32px;font-weight:700;color:#333;letter-spacing:0.033px;-webkit-text-stroke:0.35px #333;">Behaviours</div>
<div class="t" style="left:184.50px;top:750.73px;font-size:23px;font-weight:700;color:#8590A2;letter-spacing:2.230px;-webkit-text-stroke:0.3px #8590A2;">EC-20</div>
<div class="t" style="left:274.68px;top:746.30px;font-size:28px;color:#172B4D;letter-spacing:0.857px;-webkit-text-stroke:0.35px #172B4D;">List products updated</div>
<div class="t" style="left:1464.68px;top:749.62px;font-size:22px;font-weight:700;color:#0747A6;letter-spacing:0.036px;-webkit-text-stroke:0.35px #0747A6;">IN PROGRESS</div>
<div class="t" style="left:184.50px;top:832.73px;font-size:23px;font-weight:700;color:#8590A2;letter-spacing:2.230px;-webkit-text-stroke:0.3px #8590A2;">EC-55</div>
<div class="t" style="left:274.68px;top:828.30px;font-size:28px;color:#172B4D;letter-spacing:0.857px;-webkit-text-stroke:0.35px #172B4D;">Sort products</div>
<div class="t" style="left:1548.00px;top:832.62px;font-size:22px;font-weight:700;color:#42526E;letter-spacing:0.160px;-webkit-text-stroke:0.35px #42526E;">TO DO</div>
<div class="t" style="left:1467.00px;top:830.38px;font-size:22px;color:#fff;letter-spacing:0.300px;width:48px;text-align:center;-webkit-text-stroke:0.9px #fff;">DD</div>
<div class="t" style="left:184.50px;top:914.73px;font-size:23px;font-weight:700;color:#8590A2;letter-spacing:2.230px;-webkit-text-stroke:0.3px #8590A2;">EC-54</div>
<div class="t" style="left:274.68px;top:910.30px;font-size:28px;color:#172B4D;letter-spacing:0.857px;-webkit-text-stroke:0.35px #172B4D;">Advanced search</div>
<div class="t" style="left:1548.00px;top:914.62px;font-size:22px;font-weight:700;color:#42526E;letter-spacing:0.160px;-webkit-text-stroke:0.35px #42526E;">TO DO</div>
<div class="t" style="left:1467.00px;top:912.38px;font-size:22px;color:#fff;letter-spacing:0.300px;width:48px;text-align:center;-webkit-text-stroke:0.9px #fff;">AN</div>
<div class="t" style="left:184.50px;top:996.73px;font-size:23px;font-weight:700;color:#8590A2;letter-spacing:2.230px;-webkit-text-stroke:0.3px #8590A2;">EC-56</div>
<div class="t" style="left:274.68px;top:992.30px;font-size:28px;color:#172B4D;letter-spacing:0.857px;-webkit-text-stroke:0.35px #172B4D;">Filter products</div>
<div class="t" style="left:1464.68px;top:995.62px;font-size:22px;font-weight:700;color:#0747A6;letter-spacing:0.036px;-webkit-text-stroke:0.35px #0747A6;">IN PROGRESS</div>
<div class="t" style="left:1385.00px;top:994.38px;font-size:22px;color:#fff;letter-spacing:0.300px;width:48px;text-align:center;-webkit-text-stroke:0.9px #fff;">AN</div>
<div class="t" style="left:184.50px;top:1078.73px;font-size:23px;font-weight:700;color:#8590A2;letter-spacing:2.230px;-webkit-text-stroke:0.3px #8590A2;">EC-41</div>
<div class="t" style="left:270.68px;top:1074.30px;font-size:28px;color:#172B4D;letter-spacing:0.857px;-webkit-text-stroke:0.35px #172B4D;">Search discount products</div>
<div class="t" style="left:1548.00px;top:1078.62px;font-size:22px;font-weight:700;color:#42526E;letter-spacing:0.160px;-webkit-text-stroke:0.35px #42526E;">TO DO</div>
<div class="t" style="left:1467.00px;top:1076.38px;font-size:22px;color:#fff;letter-spacing:0.300px;width:48px;text-align:center;-webkit-text-stroke:0.9px #fff;">AN</div>
<div class="a" style="left:1700px;top:1180px;width:1143px;height:349px;overflow:hidden">
<div class="t" style="left:116.00px;top:19.80px;font-size:28px;color:#333;letter-spacing:0.000px;-webkit-text-stroke:0.35px #333">Buys</div>
<div class="t" style="left:116.00px;top:67.30px;font-size:28px;color:#333;letter-spacing:0.000px;-webkit-text-stroke:0.35px #333">1) kids products</div>
<div class="t" style="left:116.00px;top:120.70px;font-size:28px;color:#333;letter-spacing:0.000px;-webkit-text-stroke:0.35px #333">2) fashion,</div>
<div class="t" style="left:116.00px;top:172.80px;font-size:28px;color:#333;letter-spacing:0.000px;-webkit-text-stroke:0.35px #333">3) books,</div>
<div class="t" style="left:116.00px;top:226.60px;font-size:28px;color:#333;letter-spacing:0.000px;-webkit-text-stroke:0.35px #333">4) kitchen and electronic items.</div>
<div class="t" style="left:116.00px;top:278.70px;font-size:28px;color:#333;letter-spacing:0.000px;-webkit-text-stroke:0.35px #333">Buys items during sales, adds mutiple items in single order, Read information</div>
<div class="t" style="left:116.00px;top:328.30px;font-size:28px;color:#333;letter-spacing:0.000px;-webkit-text-stroke:0.35px #333">and reviews quickly</div>
</div>
</body></html>
